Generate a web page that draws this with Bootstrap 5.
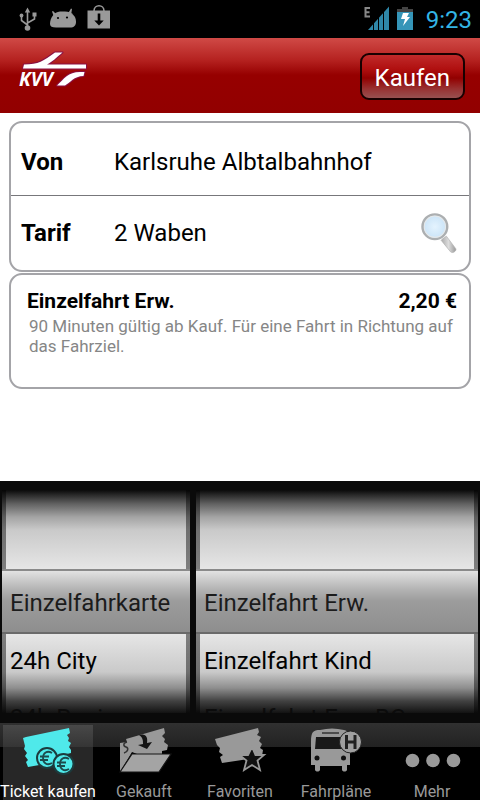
<!DOCTYPE html>
<html lang="de">
<head>
<meta charset="utf-8">
<meta name="viewport" content="width=device-width, initial-scale=1">
<title>KVV Ticket kaufen</title>
<link href="https://cdn.jsdelivr.net/npm/bootstrap@5.3.0/dist/css/bootstrap.min.css" rel="stylesheet">
<style>
body { font-family: Roboto, "Noto Sans", sans-serif; font-size: 24px; line-height: 28px; color: #000; background: #fff; }
.statusbar { height: 38px; background: #000; }
.statusbar time { padding: 2px 0 0 4px; }
.clock { color: #33b5e5; }
.appbar { height: 75px; padding: 2px 15px 0 16px; background: linear-gradient(#d04a46, #b52220 22px, #960000 37px, #920000); }
.buy-btn { height: 47px; padding: 2px 13px 0; border: 2px solid #180000; border-radius: 9px; color: #fff; font-size: 24px; line-height: 28px;
  background: linear-gradient(#c02a2a, #b01010 14px, #920000 23px, #983232 34px, #985050); }
.content { padding: 8px 9px 16px; }
.panel { border: 2px solid #a4a4a8; border-radius: 13px; background: #fff; }
.trip-row { height: 72px; padding: 6px 10px 0 10px; }
.trip-row + .trip-row { border-top: 1px solid #77777b; height: 75px; padding-top: 0; }
.trip-label { width: 93px; }
.ticket { min-height: 116px; margin-top: 1px; padding: 14px 12px 12px 16px; }
.ticket h2, .ticket strong { font-size: 21px; line-height: 24px; }
.ticket p { font-size: 17px; line-height: 20px; color: #868686; padding: 3px 0 0 2px; margin: 0 -8px 0 0; }
.picker { height: 242px; padding: 9px 2px 10px; background: #0a0a0a; gap: 6px; }
.wheel { background: #e6e6e6; padding-top: 79px; }
.wheel-first { width: 188px; }
.wheel::after { content: ""; position: absolute; inset: 0; pointer-events: none;
  background:
    linear-gradient(90deg, rgba(0,0,0,.45) 4px, transparent 4px calc(100% - 4px), rgba(0,0,0,.45) calc(100% - 4px)) 0 0 / 100% 79px no-repeat,
    linear-gradient(90deg, rgba(0,0,0,.45) 4px, transparent 4px calc(100% - 4px), rgba(0,0,0,.45) calc(100% - 4px)) 0 144px / 100% 79px no-repeat,
    linear-gradient(rgba(10,10,10,1), rgba(10,10,10,.6) 14px, rgba(10,10,10,.3) 27px, rgba(10,10,10,.13) 40px, transparent 79px, transparent 144px, rgba(10,10,10,.13) 182px, rgba(10,10,10,.4) 198px, rgba(10,10,10,.75) 211px, rgba(10,10,10,.96)); }
.wheel button { display: block; width: 100%; height: 57px; padding: 0 8px; border: 0; background: none; color: #000; text-align: left; font-size: 24px; white-space: nowrap; }
.wheel button.chosen { height: 65px; padding-top: 2px; color: #1c1c1c; border-top: 2px solid #8a8a8a; border-bottom: 2px solid #6a6a6a;
  background: linear-gradient(#e2e2e2, #b4b4b4 18px, #9c9c9c 30px, #8e8e8e); }
.wheel button:nth-child(2) { height: 53px; }
.wheel button:nth-child(3) { color: #222; padding-top: 4px; }
.tabbar { background: linear-gradient(#303030, #222 24px, #000 24px); height: 77px; }
.tab-link { flex: 1 1 0; min-width: 0; color: #999; font-size: 16px; line-height: 18px; text-decoration: none; white-space: nowrap; padding-top: 3px; }
.tab-link svg { display: block; height: 57px; width: 90px; flex-shrink: 0; }
.tab-link.current { color: #fff; background: linear-gradient(#484848, #353535 22px, #272727 22px) center 2px / calc(100% - 6px) 100% no-repeat; }
</style>
</head>
<body>
<div class="d-flex flex-column min-vh-100 overflow-hidden">
  <div class="statusbar d-flex align-items-center flex-shrink-0">
    <svg width="120" height="38" viewBox="0 0 120 38" aria-hidden="true">
      <g fill="none" stroke="#999" stroke-width="1.6"><path d="M27.500 28V11M27.500 25L21.500 20.500V16M27.500 23L34.500 19V14"/></g>
      <g fill="#999"><circle cx="27.500" cy="28" r="2.800"/><circle cx="21.500" cy="15.500" r="1.900"/><path d="M32.500 12.500h4v4h-4zM24.800 12.500l2.700-5 2.700 5z"/>
      <path d="M50 24C50 18 54 12 60 11.500h5c7 0 11 5 11 10 0 4-2 6-6 6H56c-4 0-6-1-6-3.500z"/><path d="M52 11.500l1-0.500 4 4-3 2zM72 9l-1-0.500-3 5 3 2z"/>
      <path d="M87.500 10.500h22.500V28.500H87.500z"/></g>
      <path d="M94 11C94 4 104 4 104 11" fill="none" stroke="#999" stroke-width="1.600"/>
      <circle cx="58" cy="18" r="1.100"/><circle cx="67" cy="17.500" r="1.100"/>
      <path d="M97.700 13.500h2.600v7h3.400l-4.700 5-4.700-5h3.400z"/>
    </svg>
    <svg class="ms-auto" width="56" height="38" viewBox="0 0 56 38" aria-hidden="true">
      <path d="M12 8H7.500v8.500H12M7.500 12.200H11.500" fill="none" stroke="#888" stroke-width="2"/>
      <path d="M10 30L31 6.500V30z" fill="#2f87a8"/>
      <path d="M15.500 22v8M20.500 17v13M25.500 12v18" stroke="#000" stroke-width="1"/>
      <path d="M44 7h6v2h5v4H39V9h5z" fill="#444"/><path d="M39 12h16v18H39z" fill="#3595b8"/>
      <path d="M45 13h6l-2 4h3l-7 9 2-7h-4z" fill="#fff"/>
    </svg>
    <time class="clock mx-2">9:23</time>
  </div>

  <header class="appbar d-flex align-items-center justify-content-between flex-shrink-0">
    <svg width="72" height="73" viewBox="16 40 72 73" role="img" aria-label="KVV">
      <g stroke="#8a1044" stroke-width="2" stroke-linejoin="round" fill="#fff" paint-order="stroke">
        <path d="M24 64.500C39 64.500 43 61 55 52.500h7.500C56 58 52 62 47 64.500h39v4H23z"/>
        <path d="M57 85.500C64 79 68 72 80 72h4.500l-1 4C74 76 70 83 65 85.500z"/>
      </g>
      <text x="19" y="86" font-family="Open Sans, Roboto, sans-serif" font-size="19" font-weight="700" font-style="italic" fill="#fff">KVV</text>
    </svg>
    <button type="button" class="buy-btn">Kaufen</button>
  </header>

  <main class="content flex-grow-1">
    <section class="panel">
      <div class="trip-row d-flex align-items-center">
        <strong class="trip-label">Von</strong><span>Karlsruhe Albtalbahnhof</span>
      </div>
      <div class="trip-row d-flex align-items-center">
        <strong class="trip-label">Tarif</strong><span>2 Waben</span>
        <button type="button" class="btn p-0 border-0 ms-auto" aria-label="Tarif suchen">
          <svg class="d-block" width="42" height="46" viewBox="0 0 40 44">
            <defs><radialGradient id="glass"><stop offset="0" stop-color="#e4f3fe"/><stop offset="1" stop-color="#c9e3f7"/></radialGradient>
            <linearGradient id="grip" x2="1" y2="0"><stop offset="0" stop-color="#aaa"/><stop offset=".5" stop-color="#ddd"/><stop offset="1" stop-color="#999"/></linearGradient></defs>
            <path d="M25 27l3-2 9 12c1 2-3 5-5 3L23 29z" fill="url(#grip)" stroke="#aaa" stroke-width=".6"/>
            <circle cx="17" cy="16" r="11.700" fill="url(#glass)" stroke="#acafb1" stroke-width="2.600"/>
            <circle cx="17" cy="16" r="10.200" fill="none" stroke="#e4e8ea" stroke-width="1"/>
          </svg>
        </button>
      </div>
    </section>
    <section class="panel ticket">
      <div class="d-flex justify-content-between">
        <h2 class="fw-bold m-0">Einzelfahrt Erw.</h2><strong>2,20 €</strong>
      </div>
      <p>90 Minuten gültig ab Kauf. Für eine Fahrt in Richtung auf das Fahrziel.</p>
    </section>
  </main>

  <section class="picker d-flex flex-shrink-0" aria-label="Ticketauswahl">
    <div class="wheel wheel-first position-relative overflow-hidden flex-shrink-0">
      <button type="button" class="chosen">Einzelfahrkarte</button>
      <button type="button">24h City</button>
      <button type="button">24h Regio</button>
    </div>
    <div class="wheel position-relative overflow-hidden flex-grow-1">
      <button type="button" class="chosen">Einzelfahrt Erw.</button>
      <button type="button">Einzelfahrt Kind</button>
      <button type="button">Einzelfahrt Erw. BC</button>
    </div>
  </section>

  <nav class="tabbar d-flex flex-shrink-0">
    <a href="#" class="tab-link current d-flex flex-column align-items-center" aria-current="page">
      <svg viewBox="3 725 90 57" aria-hidden="true">
        <path d="M23 737l3-1 43-9 1 5-3 2 2 3-1 3 3 2-2 4 2 3v3l-24 6-2 5-17 3-2-5 2-2-3-4 2-3-3-4 1-3z" fill="#4fe9ea"/>
        <g fill="#4fe9ea" stroke="#1c3b3d" stroke-width="2"><circle cx="47" cy="757" r="10"/><circle cx="63.500" cy="763" r="10"/></g>
        <g fill="none" stroke="#1c4a4d" stroke-width="1.800"><path d="M52 752c-5-3-9 0-9 5s4 8 9 5M40 755.500h9M40 759h8M69 758c-5-3-9 0-9 5s4 8 9 5M57 761.500h9M57 765h8"/></g>
      </svg>Ticket kaufen</a>
    <a href="#" class="tab-link d-flex flex-column align-items-center">
      <svg viewBox="99 725 90 57" aria-hidden="true">
        <path d="M120 742l7-1-1-3 38-11 1 5-3 3 3 3-1 3 4 3-1 5-5 1v3h-25l-5-2-12 20V742z" fill="#999"/>
        <path d="M120 771l12-18h39l-12 18z" fill="#a4a4a4" stroke="#151515" stroke-width="1.200"/>
        <path d="M139 734c7-2 9 2 8 8l5-1-5 7-9-4 5-1c0-4 0-6-4-9z" fill="#151515"/>
        <path d="M127 741c-4 1-4 4-1 5s2 5-2 6" fill="none" stroke="#333" stroke-width="1.500"/>
      </svg>Gekauft</a>
    <a href="#" class="tab-link d-flex flex-column align-items-center">
      <svg viewBox="195 725 90 57" aria-hidden="true">
        <path d="M215 738l43-11 1 4-2 3 4 2-2 4 3 3-2 4 3 2-1 6-20 4-20 3-2-6 3-2-4-3 1-4-3-3z" fill="#999"/>
        <path d="M252 746l3.500 8h8.500l-6.500 5.500 2.500 9.500-8-5-8 5 2.500-9.500-7-5.500h8.500z" fill="#111" stroke="#999" stroke-width="1.800"/>
      </svg>Favoriten</a>
    <a href="#" class="tab-link d-flex flex-column align-items-center">
      <svg viewBox="291 725 90 57" aria-hidden="true">
        <path d="M311 764v-23c0-10 2-12 9-12 8-2 16-2 24 0 5 1 6 4 6 12v23h-3v5c-1 2-4 2-5 0v-4h-22v4c-1 2-4 2-5 0v-5z" fill="#999"/>
        <path d="M316 736h27v12h-28z" fill="#191919"/><path d="M322 732h17" stroke="#333" stroke-width="1.500"/>
        <circle cx="317" cy="757" r="2.500" fill="#111"/><circle cx="343.500" cy="757" r="2.500" fill="#111"/>
        <circle cx="350.500" cy="741" r="11" fill="#a0a0a0" stroke="#222" stroke-width="1"/>
        <path d="M346.500 734v14M355 734v14M346.500 741h9" stroke="#222" stroke-width="3" fill="none"/>
      </svg>Fahrpläne</a>
    <a href="#" class="tab-link d-flex flex-column align-items-center">
      <svg viewBox="387 725 90 57" aria-hidden="true"><g fill="#999"><circle cx="412.500" cy="759.500" r="6.800"/><circle cx="433" cy="759.500" r="6.800"/><circle cx="453.500" cy="759.500" r="6.800"/></g></svg>Mehr</a>
  </nav>
</div>
<script src="https://cdn.jsdelivr.net/npm/bootstrap@5.3.0/dist/js/bootstrap.bundle.min.js"></script>
</body>
</html>
